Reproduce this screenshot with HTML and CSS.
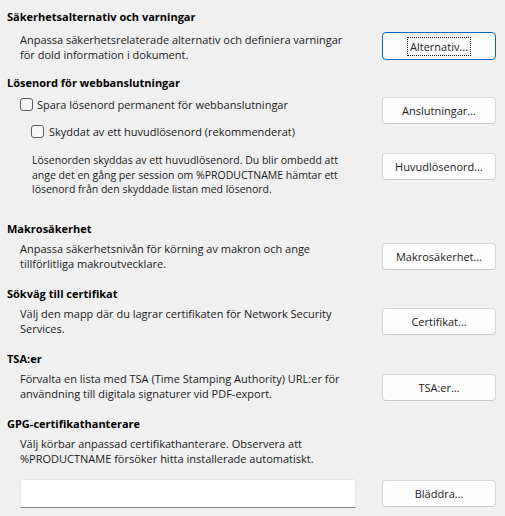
FILE: index.html
```html
<!DOCTYPE html>
<html lang="sv">
<head>
<meta charset="utf-8">
<title>Säkerhet</title>
<link rel="stylesheet" href="styles.css">
</head>
<body>
<main class="page">

  <section class="section section-first">
    <h2 class="title">Säkerhetsalternativ och varningar</h2>
    <div class="row row-center">
      <p class="desc">Anpassa säkerhetsrelaterade alternativ och definiera varningar för dold information i dokument.</p>
      <button class="btn btn-focus btn-top"><span class="focus">Alternativ…</span></button>
    </div>
  </section>

  <section class="section section-pw">
    <h2 class="title">Lösenord för webbanslutningar</h2>
    <div class="row row-start row-cb1">
      <label class="check"><input type="checkbox" class="cb"><span>Spara lösenord permanent för webbanslutningar</span></label>
      <button class="btn">Anslutningar…</button>
    </div>
    <div class="row row-start">
      <label class="check check-sub"><input type="checkbox" class="cb"><span>Skyddat av ett huvudlösenord (rekommenderat)</span></label>
    </div>
    <div class="row row-start row-note">
      <p class="desc note">Lösenorden skyddas av ett huvudlösenord. Du blir ombedd att ange det en gång per session om %PRODUCTNAME hämtar ett lösenord från den skyddade listan med lösenord.</p>
      <button class="btn">Huvudlösenord…</button>
    </div>
  </section>

  <section class="section">
    <h2 class="title">Makrosäkerhet</h2>
    <div class="row row-center">
      <p class="desc">Anpassa säkerhetsnivån för körning av makron och ange tillförlitliga makroutvecklare.</p>
      <button class="btn">Makrosäkerhet…</button>
    </div>
  </section>

  <section class="section">
    <h2 class="title">Sökväg till certifikat</h2>
    <div class="row row-center">
      <p class="desc">Välj den mapp där du lagrar certifikaten för Network Security Services.</p>
      <button class="btn">Certifikat…</button>
    </div>
  </section>

  <section class="section">
    <h2 class="title">TSA:er</h2>
    <div class="row row-center">
      <p class="desc">Förvalta en lista med TSA (Time Stamping Authority) URL:er för användning till digitala signaturer vid PDF-export.</p>
      <button class="btn btn-low">TSA:er…</button>
    </div>
  </section>

  <section class="section section-last">
    <h2 class="title">GPG-certifikathanterare</h2>
    <div class="row row-center">
      <p class="desc">Välj körbar anpassad certifikathanterare. Observera att %PRODUCTNAME försöker hitta installerade automatiskt.</p>
    </div>
    <div class="row row-center row-input">
      <input type="text" class="field" aria-label="Certifikathanterare">
      <button class="btn">Bläddra…</button>
    </div>
  </section>

</main>
</body>
</html>
```
FILE: styles.css
```css
* { box-sizing: border-box; }

html, body {
  margin: 0;
  background: #f0f0f0;
}

body {
  font-family: "Open Sans", "Noto Sans", sans-serif;
  font-size: 11px;
  line-height: 15px;
  color: #1a1a1a;
}

.page {
  display: flex;
  flex-direction: column;
  width: 505px;
  padding: 9px 9px 0 7px;
}

.section {
  display: flex;
  flex-direction: column;
  margin-bottom: 15px;
}
.section-first { margin-bottom: 13px; }
.section-pw { margin-bottom: 24px; }
.section-last { margin-bottom: 0; }

.title {
  margin: 0;
  font-size: 11px;
  line-height: 15px;
  font-weight: 700;
  color: #000;
}

.row {
  display: grid;
  grid-template-columns: 1fr 114px;
  column-gap: 26px;
  margin-top: 5px;
}
.section-first .row { margin-top: 8px; }
.row-center { align-items: center; }
.row-start { align-items: start; margin-top: 0; }
.row-cb1 { margin-top: 7px; }
.row-note { margin-top: 14px; }
.row-input { margin-top: 13px; }

.desc {
  grid-column: 1;
  margin: 0 0 0 13px;
  max-width: 328px;
}

.note {
  margin-left: 25px;
  max-width: 316px;
  font-size: 10.5px;
  line-height: 14.7px;
}

.check {
  grid-column: 1;
  display: flex;
  align-items: center;
  gap: 4px;
  margin-left: 13px;
  white-space: nowrap;
}
.check-sub { margin-left: 24px; gap: 5px; }

.cb {
  appearance: none;
  -webkit-appearance: none;
  flex: none;
  width: 13px;
  height: 13px;
  margin: 0;
  border: 1px solid #5d5d5d;
  border-radius: 3px;
  background: #f7f7f7;
}

.btn {
  grid-column: 2;
  width: 114px;
  height: 27px;
  padding: 0;
  display: flex;
  align-items: center;
  justify-content: center;
  font-family: inherit;
  font-size: 11px;
  line-height: 15px;
  color: #1a1a1a;
  background: #fdfdfd;
  border: 1px solid #d6d6d6;
  border-bottom-color: #c6c6c6;
  border-radius: 4px;
}
.btn-focus {
  border: 1px solid #0067c0;
  height: 28px;
}
.btn-top { align-self: start; }
.btn-low { margin-top: 3px; }

.focus {
  padding: 1px 2px;
  outline: 1px dotted #1a1a1a;
  outline-offset: 0;
}

.field {
  grid-column: 1;
  margin-left: 13px;
  height: 29px;
  padding: 0 8px;
  font-family: inherit;
  font-size: 11px;
  background: #fff;
  border: 1px solid #e6e6e6;
  border-bottom: 1px solid #868686;
  border-radius: 3px 3px 0 0;
  outline: none;
}
```
